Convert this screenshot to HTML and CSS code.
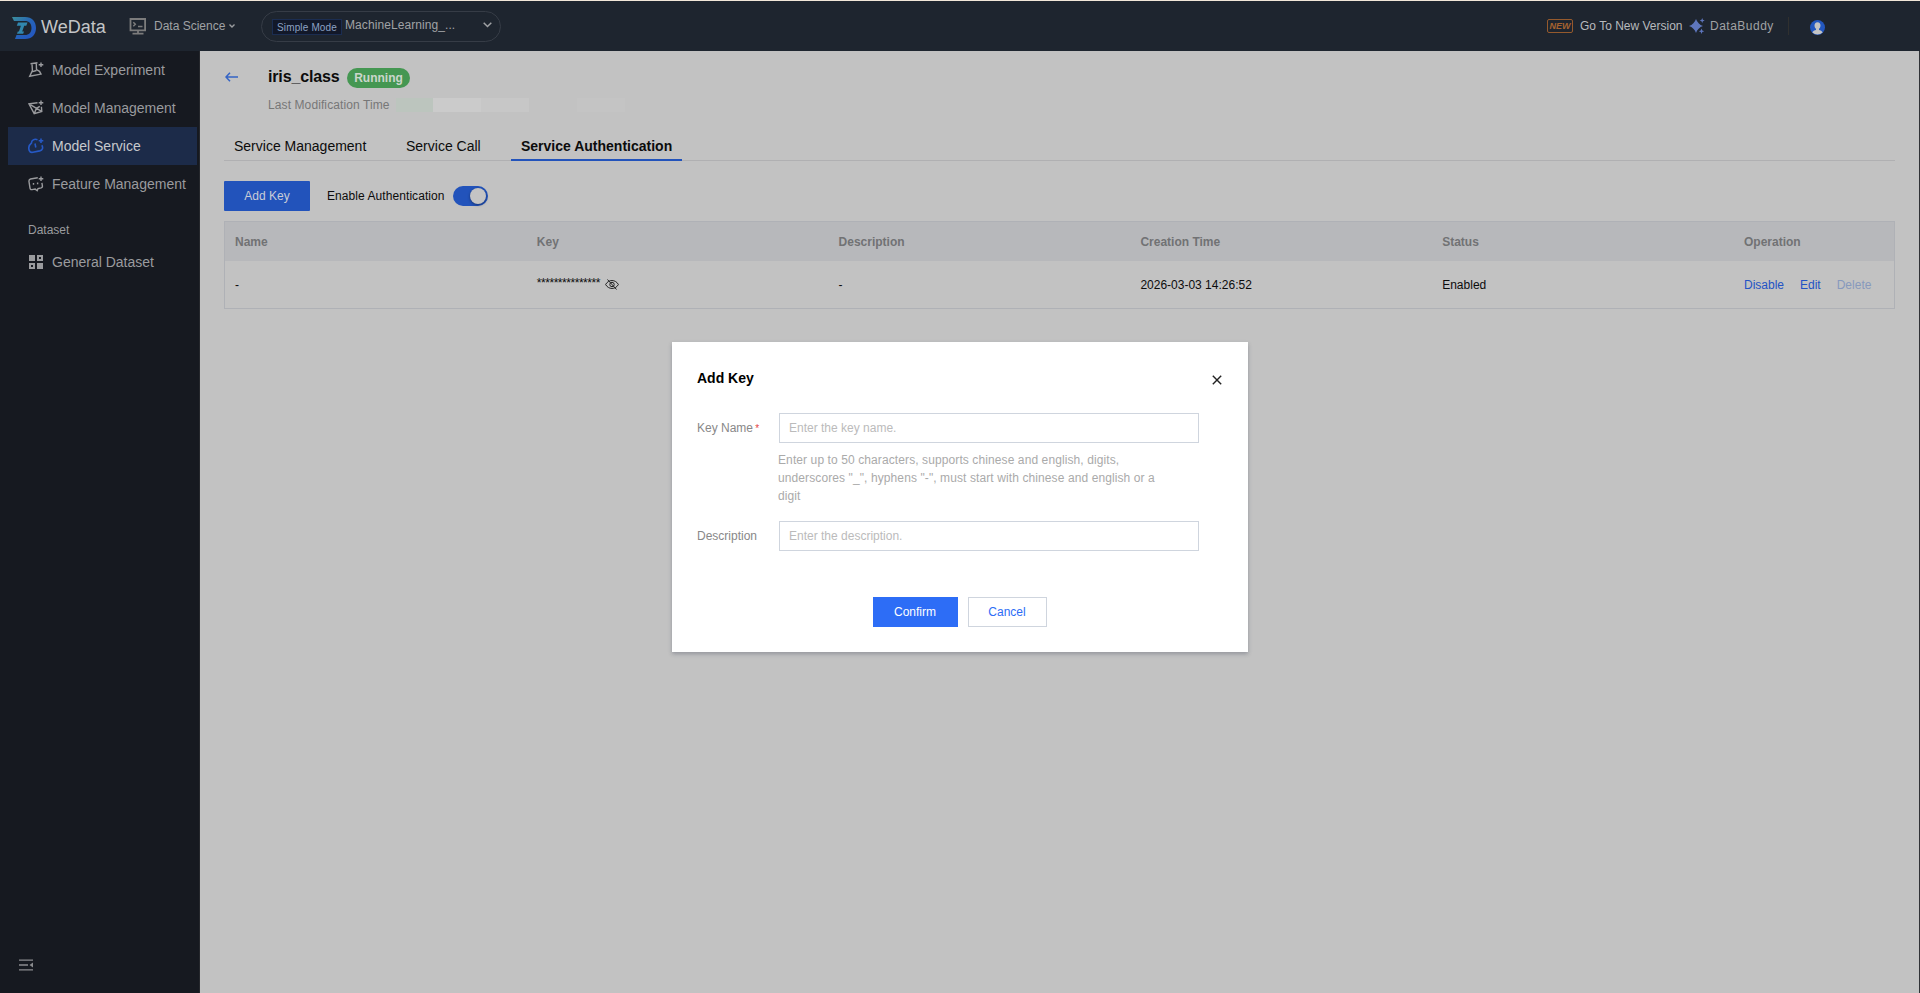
FILE: index.html
```html
<!DOCTYPE html>
<html lang="en">

<head>
    <meta charset="UTF-8">
    <meta name="viewport" content="width=device-width, initial-scale=1.0">
    <title>WeData</title>
    <link rel="stylesheet" href="styles.css">
</head>
<body>
    <div class="header">
        <svg class="logo" width="24" height="22" viewBox="0 0 24 22">
            <defs>
                <linearGradient id="logo-fill" x1="0" y1="0" x2="1" y2="1">
                    <stop offset="0" stop-color="#3c8f9b"/>
                    <stop offset=".5" stop-color="#2563b8"/>
                    <stop offset="1" stop-color="#2454c4"/>
                </linearGradient>
            </defs>
            <path fill="url(#logo-fill)" d="M0 0h13c7 0 11 4.500 11 11s-4 11-11 11H3l1.500-4H13c4 0 6.500-2.500 6.500-7S17 4 13 4H2z"/>
            <path fill="#3187ae" d="M6 5.500h9.500l-1.200 3.300h-2.100l-2 5.700H12l-.8 2.300H5l.8-2.300h1.100l2-5.700H4.800z"/>
        </svg>
        <span class="brand">WeData</span>
        <svg class="screen" width="18" height="17" viewBox="0 0 18 17" fill="none" stroke="#7c7c7c" stroke-width="1.800">
            <path d="M1.500 1h14.600v11.300H1.500zM3.500 15.600h11M9 12v3"/>
            <path d="M4.300 4.300l2 2-2 2M9 8.600h4.500" stroke-width="1.500"/>
        </svg>
        <span class="product">Data Science</span>
        <svg class="arrow" width="6" height="4" viewBox="0 0 6 4" fill="none" stroke="#9a9c9f" stroke-width="1.400"><path d="M.5.500L3 3 5.500.500"/></svg>
        <div class="project">
            <span class="mode">Simple Mode</span>
            <span class="project-name">MachineLearning_...</span>
            <svg width="9" height="6" viewBox="0 0 9 6" fill="none" stroke="#a0a2a5" stroke-width="1.500"><path d="M.7.700l3.800 3.800L8.300.700"/></svg>
        </div>
        <div class="header-right">
            <span class="new">NEW</span>
            <span class="version">Go To New Version</span>
            <svg class="star" width="16" height="16" viewBox="0 0 16 16" fill="#5e76bd">
                <path d="M7 1Q8.800 6.200 14 8 8.800 9.800 7 15 5.200 9.800 0 8 5.200 6.200 7 1z"/>
                <path d="M13.200 0l.7 1.800 1.800.700-1.800.700-.7 1.800-.7-1.800-1.800-.7 1.800-.7zM12.500 10.500l.8 1.900 1.900.800-1.900.800-.8 1.900-.8-1.900-1.900-.8 1.900-.8z"/>
            </svg>
            <span class="buddy">DataBuddy</span>
            <span class="split"></span>
            <svg class="avatar" width="15" height="15" viewBox="0 0 15 15">
                <circle cx="7.500" cy="7.500" r="7.500" fill="#2357bf"/>
                <path fill="#c4c4c4" d="M7.500 2.300c-2 0-3 1.400-3 3.200 0 1.500.700 2.700 1.500 3.300v1.200c-1.400.4-3 1-3.600 2.400a7.500 7.500 0 0 0 10.200 0C12 11 10.400 10.400 9 10V8.800c.8-.6 1.500-1.800 1.500-3.300 0-1.800-1-3.200-3-3.200z"/>
            </svg>
        </div>
    </div>

    <div class="body">
        <div class="sidebar">
            <div class="menu-item">
                <svg width="16" height="16" viewBox="0 0 16 16" fill="none" stroke="currentColor" stroke-width="1.400">
                    <path d="M2.500 1.700l7-.9M4 1.800l.4 6.700L1.700 14.300l11.300-2.200-1.500-2.800-3-1.800L8.300 1.500M3.800 9.800l4.600-1.300"/>
                    <path d="M13 .500v4.600M10.700 2.800h4.600"/>
                </svg>
                <span>Model Experiment</span>
            </div>
            <div class="menu-item">
                <svg width="16" height="16" viewBox="0 0 16 16" fill="none" stroke="currentColor" stroke-width="1.400">
                    <path d="M9.500 2.800L.9 3.800l5.300 9.900 7.600-2.200-.4-4.700M1 3.900l12.600 7.500M6.200 13.500L8.500 8.300l3.300-2"/>
                    <path d="M13 .500v4.600M10.700 2.800h4.600"/>
                </svg>
                <span>Model Management</span>
            </div>
            <div class="menu-item active">
                <svg width="16" height="16" viewBox="0 0 16 16" fill="none" stroke="#2659c6" stroke-width="1.600">
                    <path d="M9.500 1.700C6.300.6 3.500 2 3.400 5.200.9 7.200.4 10.300 1.300 12.600c.6 1.500 2 2 3.600 1.700l6.800-1.400c3-.7 3.600-3.400 2.100-5.700M7 5.500l.8 4"/>
                    <path d="M13 .500v4.600M10.700 2.800h4.600"/>
                </svg>
                <span>Model Service</span>
            </div>
            <div class="menu-item">
                <svg width="16" height="16" viewBox="0 0 16 16" fill="none" stroke="currentColor" stroke-width="1.400">
                    <path d="M9.800 1.700L2.500 3C1 3.400.800 4.200 1 5.600l1 6.600c.2 1.200.8 1.600 2 1.400l3.200-.5 2 1.600.8-2.100 3.200-.7c1-.3 1.400-.8 1.200-2l-.5-3M5.500 7v1.800M9.600 6.500v1.800"/>
                    <path d="M13 .500v4.600M10.700 2.800h4.600"/>
                </svg>
                <span>Feature Management</span>
            </div>
            <div class="menu-title">Dataset</div>
            <div class="menu-item">
                <svg width="16" height="16" viewBox="0 0 16 16" fill="currentColor">
                    <path d="M1 1h6v6H1zM9 9h6v6H9z"/>
                    <path fill-rule="evenodd" d="M9 1h6v6H9zm2 2v2h2V3zM1 9h6v6H1zm2 2v2h2v-2z"/>
                </svg>
                <span>General Dataset</span>
            </div>
            <svg class="collapse" width="14" height="12" viewBox="0 0 14 12" fill="#8a8b8e">
                <path d="M0 .500h14v1.300H0zM0 5.200h9v1.500H0zM0 10.200h14v1.300H0zM14 3.500v5L10.500 6z"/>
            </svg>
        </div>

        <div class="main">
            <div class="title">
                <svg class="back" width="13" height="10" viewBox="0 0 13 10" fill="none" stroke="#3564c5" stroke-width="1.500"><path d="M5 .700L1 5l4 4.300M1 5h12"/></svg>
                <h1>iris_class</h1>
                <span class="running">Running</span>
            </div>
            <div class="time">
                <span class="time-label">Last Modification Time</span>
                <i class="mask m1"></i>
                <i class="mask m2"></i>
                <i class="mask m3"></i>
                <i class="mask m4"></i>
            </div>
            <div class="tabs">
                <span class="tab t1">Service Management</span>
                <span class="tab t2">Service Call</span>
                <span class="tab t3 on">Service Authentication</span>
            </div>
            <div class="tools">
                <span class="add">Add Key</span>
                <span class="enable">Enable Authentication</span>
                <span class="switch"></span>
            </div>
            <div class="table">
                <div class="row head">
                    <span>Name</span>
                    <span>Key</span>
                    <span>Description</span>
                    <span>Creation Time</span>
                    <span>Status</span>
                    <span>Operation</span>
                </div>
                <div class="row">
                    <span>-</span>
                    <span class="key">
                        <em>***************</em>
                        <svg width="14" height="11" viewBox="0 0 14 11" fill="none" stroke="#222">
                            <path d="M.6 5.500C3.500.200 10.500.200 13.400 5.500 10.500 10.800 3.500 10.800.6 5.500z"/>
                            <circle cx="7" cy="5.500" r="2.200"/>
                            <path d="M2.500.500l9 10"/>
                        </svg>
                    </span>
                    <span>-</span>
                    <span>2026-03-03 14:26:52</span>
                    <span>Enabled</span>
                    <span class="links"><a>Disable</a><a>Edit</a><a class="off">Delete</a></span>
                </div>
            </div>
        </div>
    </div>

    <div class="dialog">
        <div class="dialog-head">
            <h2>Add Key</h2>
            <svg width="10" height="10" viewBox="0 0 10 10" fill="none" stroke="#222" stroke-width="1.400"><path d="M.8.800l8.400 8.400M9.200.800L.8 9.200"/></svg>
        </div>
        <div class="field">
            <label>Key Name <b>*</b></label>
            <div>
                <input type="text" placeholder="Enter the key name.">
                <p>Enter up to 50 characters, supports chinese and english, digits, underscores "_", hyphens "-", must start with chinese and english or a digit</p>
            </div>
        </div>
        <div class="field">
            <label>Description</label>
            <div>
                <input type="text" placeholder="Enter the description.">
            </div>
        </div>
        <div class="btns">
            <span class="confirm">Confirm</span>
            <span class="cancel">Cancel</span>
        </div>
    </div>
</body>
</html>
```
FILE: styles.css
```css
*{
    margin: 0;
    padding: 0;
    box-sizing: border-box;
}
body{
    height: 993px;
    overflow: hidden;
    display: flex;
    flex-direction: column;
    font: 12px/18px "Liberation Sans", Arial, sans-serif;
    color: #0c0c0c;
    background: #c2c2c2;
    border-top: 1px solid #f2e7d9;
}
svg{
    display: block;
    flex: none;
}
span, label{
    white-space: nowrap;
}

/* header */
.header{
    height: 50px;
    flex: none;
    display: flex;
    align-items: center;
    padding-left: 12px;
    background: #1e252f;
    color: #a0a2a5;
}
.logo{
    margin-top: 3px;
}
.brand{
    width: 66px;
    margin: 2px 0 0 5px;
    font-size: 18px;
    color: #c3c5c7;
}
.screen{
    margin-left: 22px;
}
.product{
    width: 72px;
    margin-left: 7px;
}
.arrow{
    margin-left: 3px;
}
.project{
    width: 240px;
    height: 31px;
    margin-left: 26px;
    padding: 0 8px 0 10px;
    display: flex;
    align-items: center;
    border: 1px solid #363c46;
    border-radius: 16px;
}
.project svg{
    margin-top: -2px;
}
.mode{
    width: 70px;
    height: 16px;
    margin-top: 1px;
    border: 1px solid #1b2d51;
    background: #121829;
    color: #8da2c4;
    font-size: 10px;
    letter-spacing: .15px;
    line-height: 15px;
    text-align: center;
}
.project-name{
    flex: 1;
    margin: -2px 0 0 3px;
    letter-spacing: .08px;
}
.header-right{
    margin-left: auto;
    padding-right: 95px;
    display: flex;
    align-items: center;
}
.new{
    width: 26px;
    height: 14px;
    border: 1px solid #955a2d;
    border-radius: 2px;
    color: #a5622f;
    font-size: 9px;
    font-weight: bold;
    font-style: italic;
    line-height: 13px;
    text-align: center;
}
.version{
    width: 102px;
    margin-left: 7px;
    color: #b7babd;
}
.star{
    margin-left: 7px;
}
.buddy{
    width: 66px;
    margin-left: 5px;
    letter-spacing: .5px;
}
.split{
    width: 1px;
    height: 18px;
    margin-left: 12px;
    background: #30302f;
}
.avatar{
    margin: 3px 0 0 21px;
}

/* sidebar */
.body{
    flex: 1;
    display: flex;
    min-height: 0;
}
.sidebar{
    width: 200px;
    flex: none;
    display: flex;
    flex-direction: column;
    padding: 0 2px 22px 8px;
    background: #161920;
    border-right: 1px solid #25272c;
    color: #9a9b9e;
}
.menu-item{
    height: 38px;
    display: flex;
    align-items: center;
    padding-left: 20px;
    gap: 8px;
    font-size: 14px;
}
.active{
    background: #1c2b49;
    color: #c7c9cd;
}
.menu-title{
    height: 40px;
    padding: 18px 0 0 20px;
}
.collapse{
    margin: auto 0 0 11px;
}

/* page */
.main{
    flex: 1;
    padding: 0 24px;
    border-right: 1px solid #303236;
}
.title{
    height: 41px;
    padding-top: 10px;
    display: flex;
    align-items: center;
}
.back{
    margin-left: 1px;
}
.title h1{
    width: 71px;
    margin-left: 30px;
    font-size: 16px;
    line-height: 24px;
    letter-spacing: -.15px;
}
.running{
    height: 20px;
    width: 63px;
    margin: 2px 0 0 8px;
    border-radius: 10px;
    background: #459752;
    color: #cbd6cc;
    font-weight: bold;
    line-height: 20px;
    text-align: center;
}
.time{
    height: 26px;
    padding-left: 44px;
    display: flex;
    align-items: center;
    color: #777;
}
.time-label{
    width: 128px;
    letter-spacing: .1px;
}
.mask{
    height: 14px;
    background: #c7c7c7;
}
.m1{
    width: 37px;
    background: #bcc5be;
}
.m2{
    width: 48px;
    background: #cbcbcb;
}
.m3{
    width: 48px;
}
.m4{
    width: 48px;
    margin-left: 48px;
    background: #c4c4c4;
}
.tabs{
    height: 43px;
    display: flex;
    align-items: flex-end;
    border-bottom: 1px solid #b0b0b2;
    font-size: 14px;
}
.tab{
    height: 28px;
    margin-bottom: -1px;
    padding: 0 10px;
    line-height: 26px;
}
.t1{
    width: 172px;
}
.t2{
    width: 115px;
}
.t3{
    width: 171px;
}
.on{
    font-weight: bold;
    border-bottom: 2px solid #2253bb;
}
.tools{
    height: 60px;
    padding-top: 20px;
    display: flex;
}
.add{
    width: 86px;
    height: 30px;
    border-radius: 1px;
    background: #2253bb;
    color: #c9cdd7;
    line-height: 30px;
    text-align: center;
}
.enable{
    width: 118px;
    margin-left: 17px;
    letter-spacing: .07px;
    line-height: 30px;
}
.switch{
    width: 35px;
    height: 20px;
    margin: 5px 0 0 8px;
    padding: 2px;
    border-radius: 10px;
    background: #2253bb;
}
.switch::after{
    content: "";
    display: block;
    width: 16px;
    height: 16px;
    margin-left: 15px;
    border-radius: 50%;
    background: #c4c4c4;
    box-shadow: 0 1px 3px rgba(0, 0, 0, 0.4);
}
.table{
    border: 1px solid #afb1b6;
}
.row{
    height: 47px;
    display: grid;
    grid-template-columns: repeat(5, 301.8px) 1fr;
    align-items: center;
    padding-left: 10px;
}
.head{
    height: 39px;
    background: #b7b8bb;
    color: #717274;
    font-weight: bold;
}
.key{
    display: flex;
    align-items: center;
}
.key em{
    width: 68px;
    height: 22px;
    font-style: normal;
    letter-spacing: -.46px;
}
.links a{
    margin-right: 16px;
    color: #2253c5;
}
.links .off{
    color: #8799bd;
}

/* dialog */
.dialog{
    position: absolute;
    left: 672px;
    top: 342px;
    width: 576px;
    height: 310px;
    padding: 26px 26px 26px 25px;
    background: #fff;
    box-shadow: 0 2px 4px rgba(54, 58, 80, 0.32);
}
.dialog-head{
    height: 45px;
    display: flex;
    justify-content: space-between;
}
.dialog-head h2{
    font-size: 14px;
    line-height: 20px;
    color: #000;
}
.dialog-head svg{
    margin-top: 7px;
}
.field{
    display: flex;
    color: #888;
}
.field label{
    width: 82px;
    line-height: 30px;
}
.field b{
    margin-left: -1px;
    color: #e54545;
    font-weight: normal;
    font-size: 10px;
}
.field input{
    display: block;
    width: 420px;
    height: 30px;
    padding: 0 9px;
    border: 1px solid #cfd5de;
    font: inherit;
}
.field input::placeholder{
    color: #bbb;
}
.field p{
    width: 390px;
    height: 78px;
    margin-left: -1px;
    padding-top: 8px;
    color: #aaa;
    letter-spacing: .1px;
}
.btns{
    display: flex;
    justify-content: center;
    gap: 10px;
    margin-top: 46px;
    line-height: 30px;
    text-align: center;
}
.confirm{
    width: 85px;
    background: #2d6df6;
    color: #fff;
}
.cancel{
    width: 79px;
    border: 1px solid #cfd5de;
    line-height: 28px;
    color: #2d6df6;
}
```
